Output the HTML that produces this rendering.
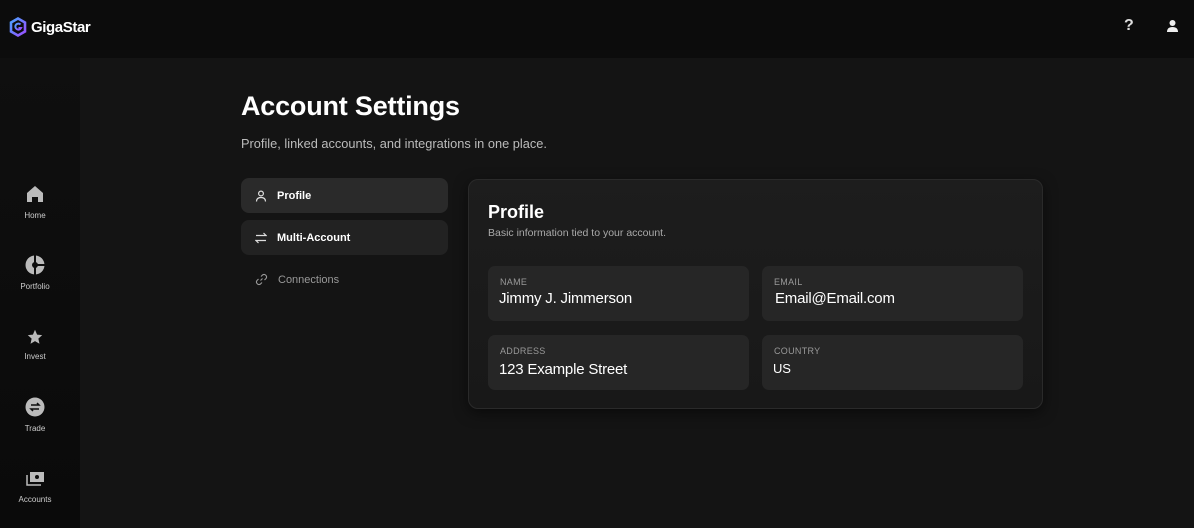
<!DOCTYPE html>
<html><head><meta charset="utf-8"><style>
*{margin:0;padding:0;box-sizing:border-box}
body{width:1194px;height:528px;background:#141414;font-family:"Liberation Sans",sans-serif;color:#fff;position:relative;overflow:hidden}
.hdr{position:absolute;left:0;top:0;width:1194px;height:58px;background:#0c0c0c}
.side{position:absolute;left:0;top:58px;width:80px;height:470px;background:linear-gradient(180deg,#0f0f0f,#0a0a0a)}
.logo{position:absolute;left:9px;top:17px;display:flex;align-items:center;font-size:15px;font-weight:bold;letter-spacing:-0.4px}
.nav{position:absolute;left:0;width:70px;text-align:center;font-size:8px;color:#ccc}
.nav svg{display:block;margin:0 auto 7px}
h1{position:absolute;left:241px;top:91px;font-size:27px;font-weight:bold;letter-spacing:-0.2px}
.sub{position:absolute;left:241px;top:136px;font-size:12.8px;color:#bbb}
.tab{position:absolute;left:241px;width:207px;height:35px;border-radius:8px;display:flex;align-items:center;font-size:11px;font-weight:bold;padding-left:14px}
.tab svg{margin-right:10px}
.card{position:absolute;left:468px;top:179px;width:575px;height:230px;background:linear-gradient(180deg,#1d1d1d,#181818);border:1px solid #2a2a2a;border-radius:10px;box-shadow:0 4px 14px rgba(0,0,0,.5)}
.f{position:absolute;width:261px;height:55px;background:#262626;border-radius:7px;padding:11px 0 0 11px}
.f .l{font-size:9px;color:#999;letter-spacing:.3px;margin-left:1px}
.f .v{font-size:15px;color:#fff;margin-top:3px;letter-spacing:-0.2px}
</style></head><body>
<div class="hdr">
<div class="logo"><svg width="18" height="20" viewBox="0 0 18 20"><defs><linearGradient id="g" x1="0" y1="0" x2="1" y2="1"><stop offset="0" stop-color="#4aa3ff"/><stop offset="1" stop-color="#9b4dff"/></linearGradient></defs><path d="M9 1.5 L16 5.5 V14.5 L9 18.5 L2 14.5 V5.5Z" fill="none" stroke="url(#g)" stroke-width="2.6"/><path d="M11.5 7.5 A3 3 0 1 0 12 11 H9.5" fill="none" stroke="url(#g)" stroke-width="2"/></svg><span style="margin-left:4px">GigaStar</span></div>
<div style="position:absolute;left:1124px;top:17px;font-size:16px;font-weight:bold;color:#ddd">?</div>
<svg style="position:absolute;left:1166px;top:19px" width="13" height="14" viewBox="0 0 13 14"><circle cx="6.5" cy="4" r="3" fill="#eee"/><path d="M1 13 Q1 8 6.5 8 Q12 8 12 13Z" fill="#eee"/></svg>
</div>
<div class="side">
<div class="nav" style="top:126px"><svg width="20" height="20" viewBox="0 0 20 20"><path d="M2 9 L10 2 L18 9 V18 H13 V13 H7 V18 H2Z" fill="#bbb"/></svg>Home</div>
<div class="nav" style="top:197px"><svg width="20" height="20" viewBox="0 0 20 20"><circle cx="10" cy="10" r="9.5" fill="#bbb"/><path d="M10 0 V20 M10 10 H20" stroke="#0e0e0e" stroke-width="2"/><circle cx="10" cy="10" r="3" fill="#0e0e0e"/></svg>Portfolio</div>
<div class="nav" style="top:271px"><svg width="16" height="16" viewBox="0 0 20 20"><path d="M10 1 L12.6 7 L19 7.6 L14.2 12 L15.6 18.5 L10 15.2 L4.4 18.5 L5.8 12 L1 7.6 L7.4 7Z" fill="#bbb"/></svg>Invest</div>
<div class="nav" style="top:339px"><svg width="20" height="20" viewBox="0 0 20 20"><circle cx="10" cy="10" r="9.5" fill="#bbb"/><path d="M6 8 H14 L12 6 M14 12 H6 L8 14" stroke="#0e0e0e" stroke-width="1.5" fill="none"/></svg>Trade</div>
<div class="nav" style="top:412px"><svg width="20" height="18" viewBox="0 0 20 18"><rect x="5" y="2" width="14" height="10" fill="#bbb"/><circle cx="12" cy="7" r="2" fill="#0e0e0e"/><path d="M2 5 V15 H16" stroke="#bbb" stroke-width="1.5" fill="none"/></svg>Accounts</div>
</div>
<h1>Account Settings</h1>
<div class="sub">Profile, linked accounts, and integrations in one place.</div>
<div class="tab" style="top:178px;background:#2a2a2a"><svg width="12" height="12" viewBox="0 0 12 12"><circle cx="6" cy="3.5" r="2.4" fill="none" stroke="#ddd" stroke-width="1.2"/><path d="M1.5 11.5 Q1.5 7.5 6 7.5 Q10.5 7.5 10.5 11.5" fill="none" stroke="#ddd" stroke-width="1.2"/></svg>Profile</div>
<div class="tab" style="top:220px;background:#222"><svg width="12" height="12" viewBox="0 0 12 12"><path d="M1 3.5 H11 L8.5 1 M11 8.5 H1 L3.5 11" fill="none" stroke="#ddd" stroke-width="1.2"/></svg>Multi-Account</div>
<div class="tab" style="top:262px;color:#999;font-weight:normal"><svg width="13" height="13" viewBox="0 0 13 13"><path d="M5.5 7.5 L7.5 5.5 M6 3.5 L7.5 2 A2.5 2.5 0 0 1 11 5.5 L9.5 7 M7 9.5 L5.5 11 A2.5 2.5 0 0 1 2 7.5 L3.5 6" fill="none" stroke="#999" stroke-width="1.1"/></svg>Connections</div>
<div class="card">
<div style="position:absolute;left:19px;top:22px;font-size:18px;font-weight:bold">Profile</div>
<div style="position:absolute;left:19px;top:47px;font-size:10.5px;color:#aaa">Basic information tied to your account.</div>
<div class="f" style="left:19px;top:86px"><div class="l">NAME</div><div class="v">Jimmy J. Jimmerson</div></div>
<div class="f" style="left:293px;top:86px"><div class="l">EMAIL</div><div class="v" style="margin-left:2px">Email@Email.com</div></div>
<div class="f" style="left:19px;top:155px"><div class="l">ADDRESS</div><div class="v" style="margin-top:5px">123 Example Street</div></div>
<div class="f" style="left:293px;top:155px"><div class="l">COUNTRY</div><div class="v" style="margin-top:5px;font-size:13px">US</div></div>
</div>
</body></html>
